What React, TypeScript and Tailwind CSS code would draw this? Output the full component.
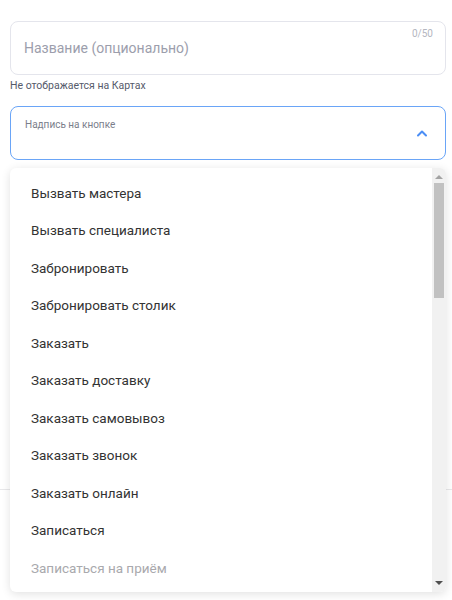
import React from 'react';

const options = [
  'Вызвать мастера',
  'Вызвать специалиста',
  'Забронировать',
  'Забронировать столик',
  'Заказать',
  'Заказать доставку',
  'Заказать самовывоз',
  'Заказать звонок',
  'Заказать онлайн',
  'Записаться',
  'Записаться на приём',
];

const ChevronUp: React.FC = () => (
  <svg width="12" height="8" viewBox="0 0 12 8" fill="none">
    <path d="M2 6.5 L6 2.5 L10 6.5" stroke="#4b8ef5" strokeWidth="2" strokeLinecap="round" strokeLinejoin="round" />
  </svg>
);

const Scrollbar: React.FC = () => (
  <div className="w-[14px] bg-[#f1f1f1] flex flex-col items-center">
    <div className="h-[15px] flex items-center justify-center pt-[2px]">
      <div className="w-0 h-0 border-l-[4px] border-r-[4px] border-b-[4px] border-l-transparent border-r-transparent border-b-[#a3a3a3]" />
    </div>
    <div className="w-[10px] h-[115px] bg-[#c1c1c1]" />
    <div className="flex-1" />
    <div className="h-[15px] flex items-center justify-center pb-[4px]">
      <div className="w-0 h-0 border-l-[4px] border-r-[4px] border-t-[4px] border-l-transparent border-r-transparent border-t-[#505050]" />
    </div>
  </div>
);

export default function App() {
  return (
    <div className="relative w-[452px] h-[600px] bg-white overflow-hidden font-['Roboto','Liberation_Sans',sans-serif]">
      <div className="pl-[10px] pr-[6px] pt-[21px]">
        <div className="relative h-[54px] rounded-lg border border-[#e4e5ec] flex items-center pl-[13px]">
          <span className="text-[14px] text-[#9c9eac]">Название (опционально)</span>
          <span className="absolute top-[4px] right-[12px] text-[10px] text-[#b4b6c0]">0/50</span>
        </div>
        <div className="mt-[4px] text-[10.5px] leading-[14px] text-[#555a6a]">Не отображается на Картах</div>
        <div className="mt-[13px] h-[54px] rounded-lg border border-[#6aa5f7] flex items-start justify-between pl-[14px] pr-[17px]">
          <span className="mt-[10px] text-[10px] text-[#7b7e8b]">Надпись на кнопке</span>
          <span className="mt-[22px]">
            <ChevronUp />
          </span>
        </div>
        <div className="mt-[329px] -ml-[10px] -mr-[6px] border-t border-[#e8e8ea]" />
      </div>

      <div className="absolute left-[10px] top-[168px] w-[436px] h-[424px] bg-white rounded-md overflow-hidden shadow-[0_2px_10px_rgba(0,0,0,0.12)] flex">
        <div className="relative flex-1 pt-[6px]">
          {options.map((o, i) => (
            <div
              key={o}
              className={`h-[37.5px] flex items-center pl-[21px] text-[13.5px] ${
                i === options.length - 1 ? 'text-[#a9a9ad]' : 'text-[#333333]'
              }`}
            >
              {o}
            </div>
          ))}
        </div>
        <Scrollbar />
      </div>
    </div>
  );
}
